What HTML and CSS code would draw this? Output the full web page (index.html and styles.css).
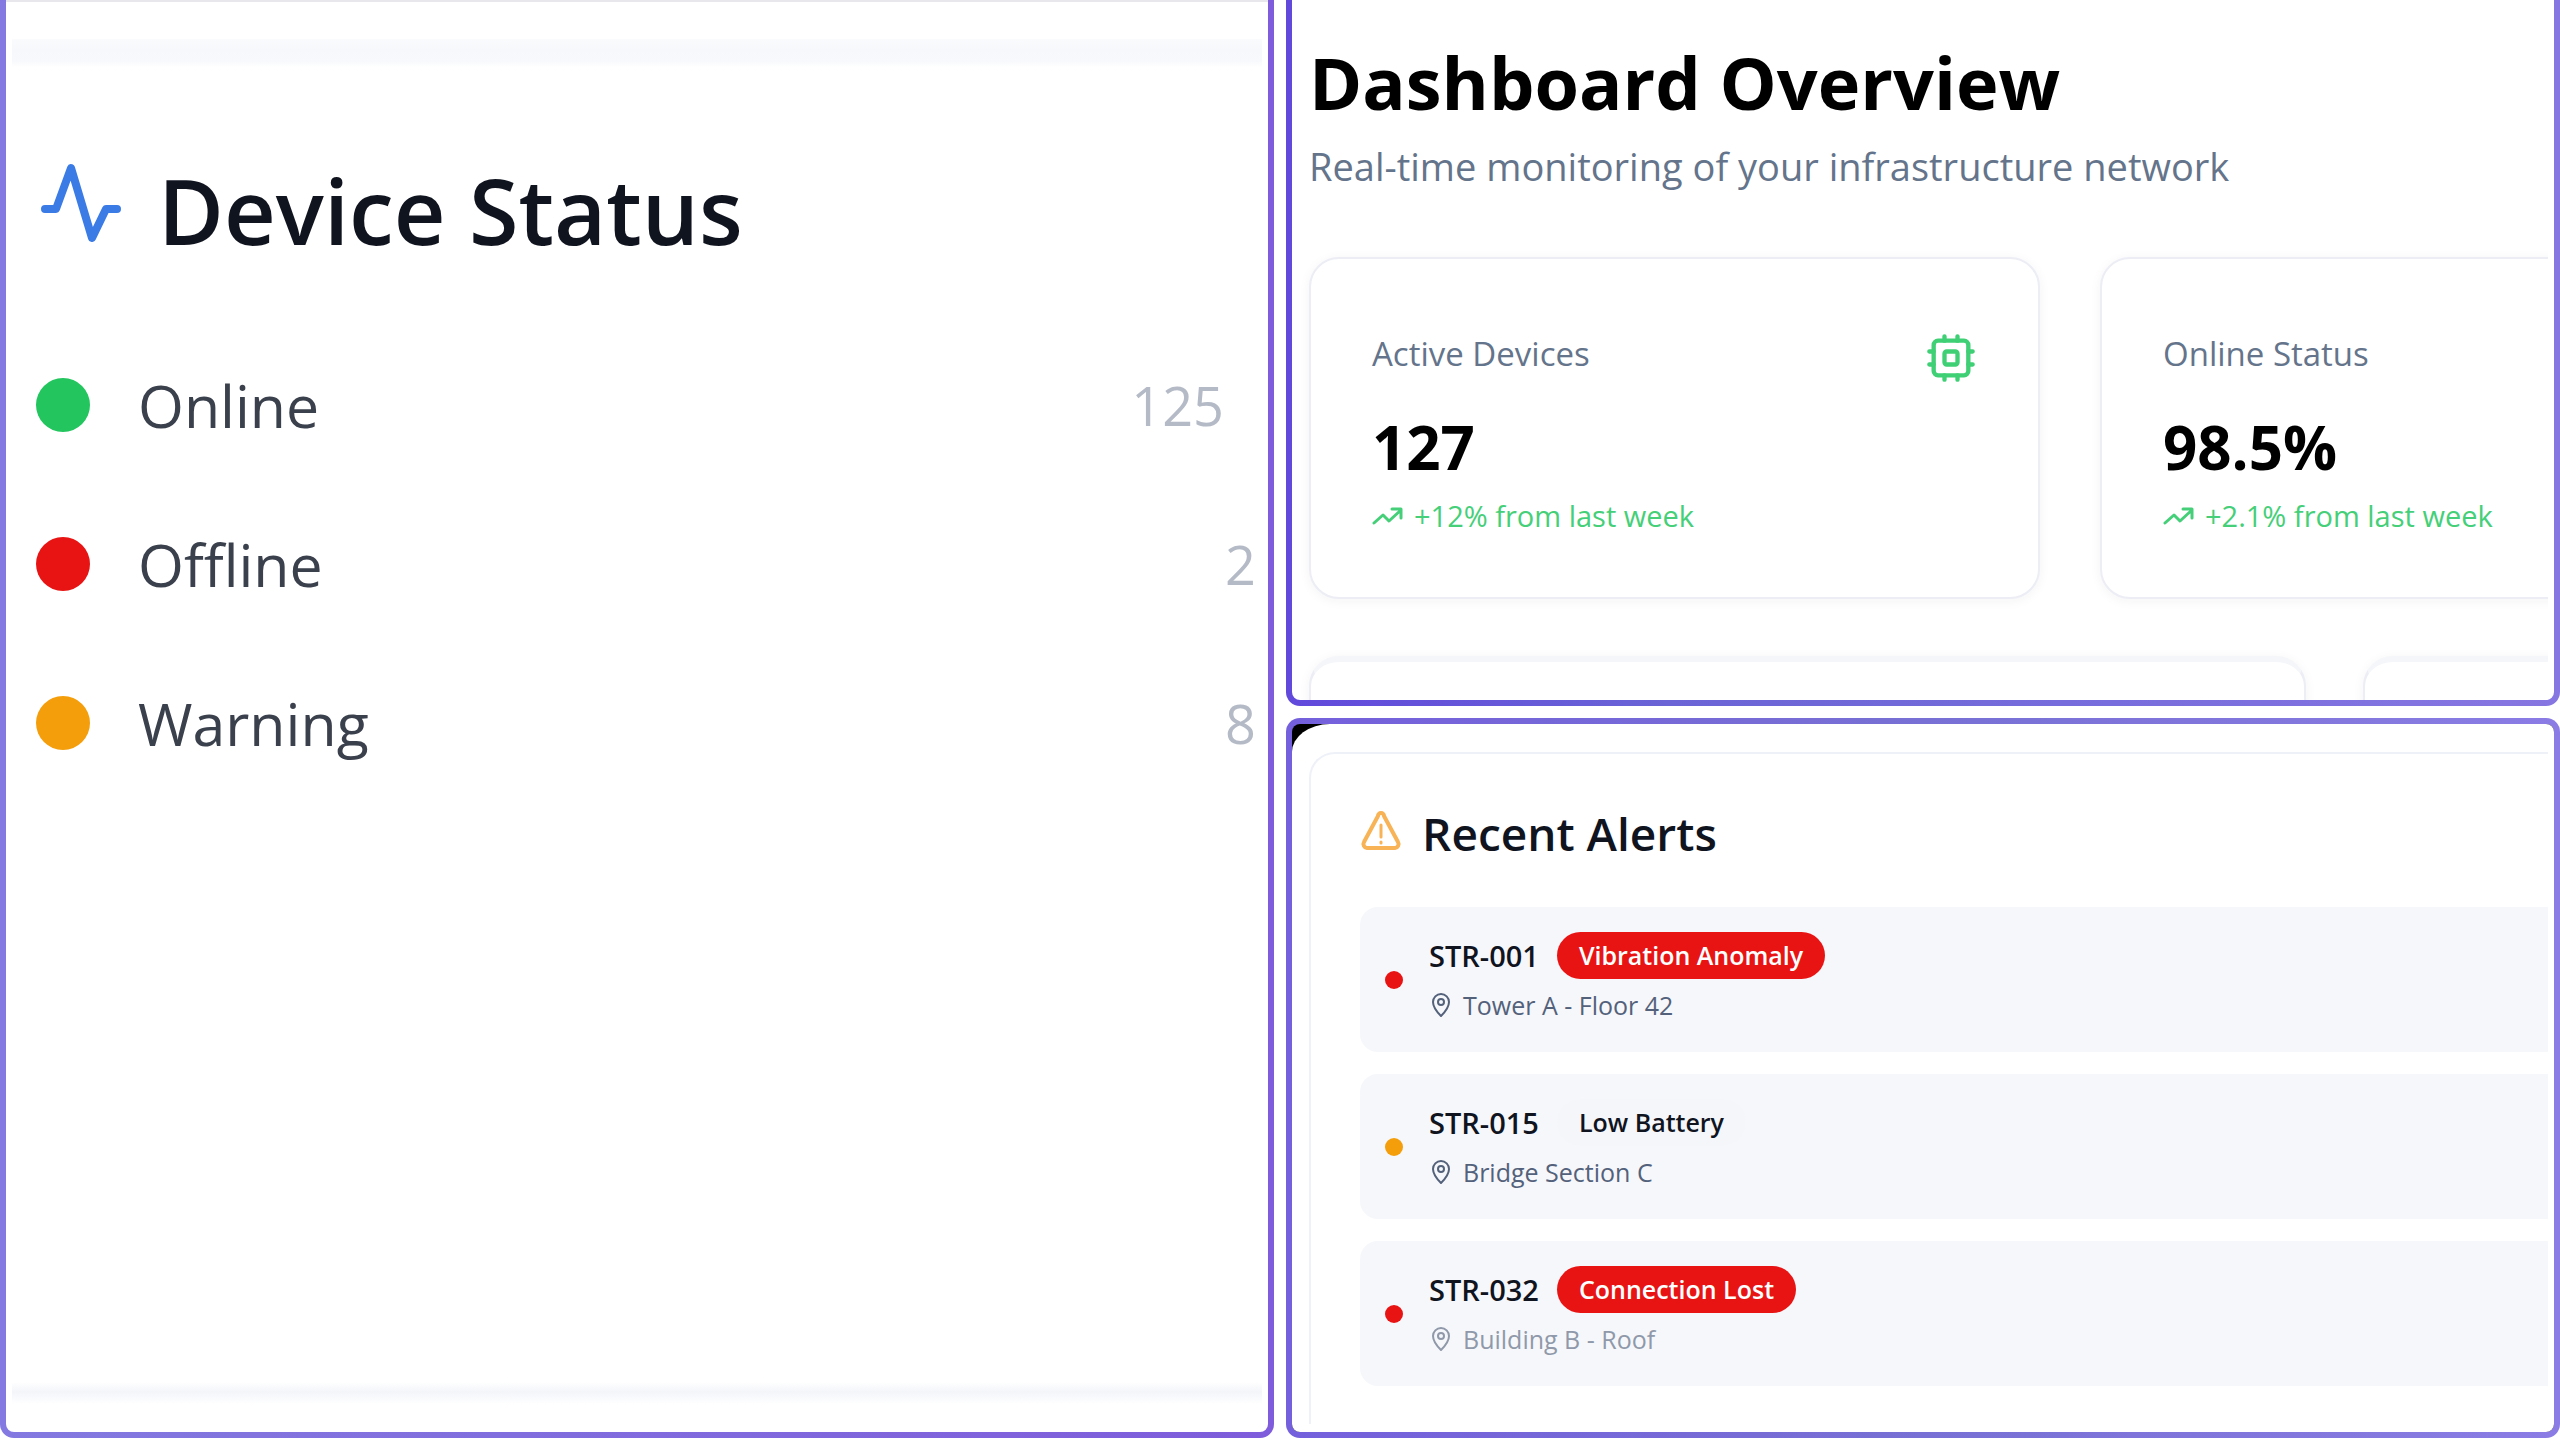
FILE: index.html
```html
<!DOCTYPE html>
<html lang="en">
<head>
  <meta charset="UTF-8" />
  <meta name="viewport" content="width=device-width, initial-scale=1.0"/>
  <title>Dashboard Overview</title>
  <link rel="stylesheet" href="styles.css">
</head>
<body>
  <main class="board">
    <section class="panel panel-status">
      <div class="status-view">
        <div class="status-card">
          <h2 class="status-title">
            <svg class="icon-activity" viewBox="0 0 82 88" aria-hidden="true">
              <path d="M5 49h11L31 8l21 70 14-29h11"/>
            </svg>
            Device Status
          </h2>
          <ul class="status-list">
            <li><span class="dot green"></span><span>Online</span><span class="count count-wide">125</span></li>
            <li><span class="dot red"></span><span>Offline</span><span class="count">2</span></li>
            <li><span class="dot amber"></span><span>Warning</span><span class="count">8</span></li>
          </ul>
        </div>
      </div>
    </section>

    <section class="panel panel-overview">
      <div class="overview-view">
        <h1>Dashboard Overview</h1>
        <p class="subtitle">Real-time monitoring of your infrastructure network</p>
        <div class="stats">
          <article class="card stat">
            <div class="stat-head">
              <h3>Active Devices</h3>
              <svg class="icon-cpu" viewBox="0 0 24 24" aria-hidden="true">
                <rect x="4" y="4" width="16" height="16" rx="2"/>
                <rect x="9" y="9" width="6" height="6" rx="1"/>
                <path d="M15 2v2M15 20v2M2 15h2M2 9h2M20 15h2M20 9h2M9 2v2M9 20v2"/>
              </svg>
            </div>
            <p class="value">127</p>
            <p class="trend">
              <svg viewBox="0 0 32 20" aria-hidden="true"><path d="M2 17l9-8 6 6L29 4M20 3h9v9"/></svg>
              +12% from last week
            </p>
          </article>
          <article class="card stat">
            <div class="stat-head">
              <h3>Online Status</h3>
            </div>
            <p class="value">98.5%</p>
            <p class="trend">
              <svg viewBox="0 0 32 20" aria-hidden="true"><path d="M2 17l9-8 6 6L29 4M20 3h9v9"/></svg>
              +2.1% from last week
            </p>
          </article>
        </div>
        <div class="charts">
          <div class="card"></div>
          <div class="card"></div>
        </div>
      </div>
    </section>

    <section class="panel panel-alerts">
      <div class="alerts-view">
        <div class="alerts-card">
          <h2 class="alerts-title">
            <svg class="icon-alert" viewBox="0 0 42 40" aria-hidden="true">
              <path d="M18 5L4 31a4 4 0 0 0 3 6h28a4 4 0 0 0 3-6L24 5a3 3 0 0 0-6 0z"/>
              <path class="mark" d="M21 14v12M21 31v1"/>
            </svg>
            Recent Alerts
          </h2>
          <ul class="alert-list">
            <li>
              <span class="dot red"></span>
              <div>
                <p class="device">STR-001 <span class="badge critical">Vibration Anomaly</span></p>
                <p class="location">
                  <svg viewBox="0 0 20 26" aria-hidden="true"><path d="M18 10c0 6-5 11-8 14C7 21 2 16 2 10a8 8 0 0 1 16 0z"/><circle cx="10" cy="10" r="3"/></svg>
                  Tower A - Floor 42
                </p>
              </div>
            </li>
            <li>
              <span class="dot amber"></span>
              <div>
                <p class="device">STR-015 <span class="badge">Low Battery</span></p>
                <p class="location">
                  <svg viewBox="0 0 20 26" aria-hidden="true"><path d="M18 10c0 6-5 11-8 14C7 21 2 16 2 10a8 8 0 0 1 16 0z"/><circle cx="10" cy="10" r="3"/></svg>
                  Bridge Section C
                </p>
              </div>
            </li>
            <li>
              <span class="dot red"></span>
              <div>
                <p class="device">STR-032 <span class="badge critical">Connection Lost</span></p>
                <p class="location faded">
                  <svg viewBox="0 0 20 26" aria-hidden="true"><path d="M18 10c0 6-5 11-8 14C7 21 2 16 2 10a8 8 0 0 1 16 0z"/><circle cx="10" cy="10" r="3"/></svg>
                  Building B - Roof
                </p>
              </div>
            </li>
          </ul>
        </div>
      </div>
    </section>
  </main>
</body>
</html>
```
FILE: styles.css
```css
:root {
  --green: #22c55e;
  --red: #e81414;
  --amber: #f59e0b;
  --text: #10141f;
  --muted: #64748b;
  --line: #ecedf5;
  --row: #f6f7fb;
}

* {
  box-sizing: border-box;
}

body {
  font-family: 'Open Sans', 'Noto Sans', sans-serif;
  background: #fff;
  color: var(--text);
  margin: 0;
}

h1, h2, h3, p, ul {
  margin: 0;
  padding: 0;
}

ul {
  list-style: none;
}

svg {
  fill: none;
  stroke: currentColor;
  stroke-linecap: round;
  stroke-linejoin: round;
  flex: none;
}

.board {
  display: grid;
  grid-template-columns: 1fr 1fr;
  grid-template-rows: 706fr 720fr;
  gap: 12px;
  height: 100vh;
  padding-bottom: 2px;
}

/* Panels with gradient frame */
.panel {
  --inner: #fff;
  --frame: linear-gradient(90deg, #8379e0, #7e5cdb);
  border: 6px solid transparent;
  border-radius: 14px;
  background: linear-gradient(var(--inner), var(--inner)) padding-box, var(--frame) border-box;
  overflow: hidden;
  min-width: 0;
  min-height: 0;
}

.panel-status {
  grid-row: 1 / 3;
  border-top: 0;
  border-top-left-radius: 0;
  border-top-right-radius: 0;
}

.panel-overview {
  --frame: linear-gradient(90deg, #6149dc, #6a64d6 30%, #8676e2);
  border-top: 0;
  border-top-left-radius: 0;
  border-top-right-radius: 0;
}

.panel-alerts {
  --inner: #000;
  --frame: linear-gradient(90deg, #7460dc, #7870d4 50%, #8a7ce4);
}

.dot {
  border-radius: 50%;
  flex: none;
}

.green { background: var(--green); }
.red { background: var(--red); }
.amber { background: var(--amber); }

/* Device status */
.status-view {
  height: 100%;
  padding: 37px 6px 28px;
  border-top: 2px solid #e8e8ec;
  display: flex;
}

.status-card {
  flex: 1;
  padding: 109px 0 0 24px;
  background:
    linear-gradient(#fafbfd, #f7f8fb 40%, #f8f9fc 80%, #fff) top / 100% 28px no-repeat,
    linear-gradient(#fff, #f3f5f9 45%, #fff) bottom / 100% 22px no-repeat;
}

.status-title {
  display: flex;
  align-items: center;
  gap: 36px;
  padding-left: 4px;
  font-size: 90px;
  font-weight: 600;
  line-height: 124px;
}

.icon-activity {
  width: 82px;
  height: 88px;
  margin-bottom: 12px;
  color: #3b7be6;
  stroke-width: 8;
}

.status-list {
  padding-top: 53px;
}

.status-list li {
  display: flex;
  align-items: center;
  height: 159px;
  padding-right: 6px;
  font-size: 59px;
  font-weight: 500;
  line-height: 80px;
  color: #3a404c;
}

.status-list .dot {
  width: 54px;
  height: 54px;
  margin-right: 48px;
}

.count {
  margin-left: auto;
  color: #b4bac6;
  font-size: 54px;
}

.count-wide {
  margin-right: 32px;
}

/* Overview */
.overview-view {
  padding: 30px 0 0 17px;
  margin-right: 6px;
  overflow: hidden;
}

h1 {
  color: #000;
  font-size: 72px;
  font-weight: 700;
  line-height: 104px;
}

.subtitle {
  color: var(--muted);
  font-size: 38px;
  line-height: 64px;
}

.stats {
  display: grid;
  grid-template-columns: repeat(2, 731px);
  gap: 60px;
  padding-top: 59px;
}

.card {
  border: 2px solid var(--line);
  border-radius: 30px;
  background: #fff;
  box-shadow: 0 2px 12px rgba(30, 30, 70, 0.05);
}

.stat {
  height: 342px;
  padding: 73px 61px 0;
}

.stat-head {
  display: flex;
  align-items: flex-start;
  justify-content: space-between;
  height: 54px;
}

h3 {
  color: var(--muted);
  font-size: 33px;
  font-weight: 500;
  line-height: 44px;
}

.icon-cpu {
  width: 52px;
  height: 52px;
  color: #3fcf74;
  stroke-width: 2;
}

.value {
  color: #000;
  font-size: 60px;
  font-weight: 700;
  line-height: 80px;
  padding-top: 21px;
}

.trend {
  display: flex;
  align-items: center;
  gap: 10px;
  color: #45cf78;
  font-size: 29px;
  line-height: 58px;
}

.trend svg {
  width: 32px;
  height: 20px;
  stroke-width: 3;
}

.charts {
  display: grid;
  grid-template-columns: repeat(2, 997px);
  gap: 57px;
  padding-top: 57px;
}

.charts .card {
  height: 400px;
  border-top: 6px solid #f5f6fa;
}

/* Recent alerts */
.alerts-view {
  height: 100%;
  padding: 28px 6px 8px 17px;
  background: #fff;
  border-top-left-radius: 38px 28px;
}

.alerts-card {
  height: 100%;
  padding: 48px 0 0 49px;
  border: 2px solid #eff1f9;
  border-right: 0;
  border-bottom: 0;
  border-radius: 26px 0 0 0;
}

.alerts-title {
  display: flex;
  align-items: center;
  gap: 20px;
  font-size: 46px;
  font-weight: 600;
  line-height: 62px;
}

.icon-alert {
  width: 42px;
  height: 40px;
  margin-bottom: 4px;
  color: #f7b355;
  stroke-width: 4;
}

.icon-alert .mark {
  stroke-width: 3;
}

.alert-list {
  display: grid;
  gap: 22px;
  padding-top: 43px;
}

.alert-list li {
  display: flex;
  align-items: center;
  gap: 26px;
  height: 145px;
  padding-left: 25px;
  border-radius: 18px 0 0 18px;
  background: var(--row);
}

.alert-list .dot {
  width: 18px;
  height: 18px;
}

.device {
  display: flex;
  align-items: center;
  gap: 18px;
  font-size: 29px;
  font-weight: 600;
  line-height: 47px;
}

.badge {
  padding: 0 22px;
  border-radius: 24px;
  background: #f5f6fa;
  font-size: 25px;
}

.badge.critical {
  background: var(--red);
  color: #fff;
}

.location {
  display: flex;
  align-items: center;
  gap: 12px;
  padding-top: 4px;
  padding-left: 2px;
  color: #53617a;
  font-size: 25px;
  line-height: 44px;
}

.location.faded {
  color: #8f99a9;
}

.location svg {
  width: 20px;
  height: 26px;
  stroke-width: 2;
}
```
